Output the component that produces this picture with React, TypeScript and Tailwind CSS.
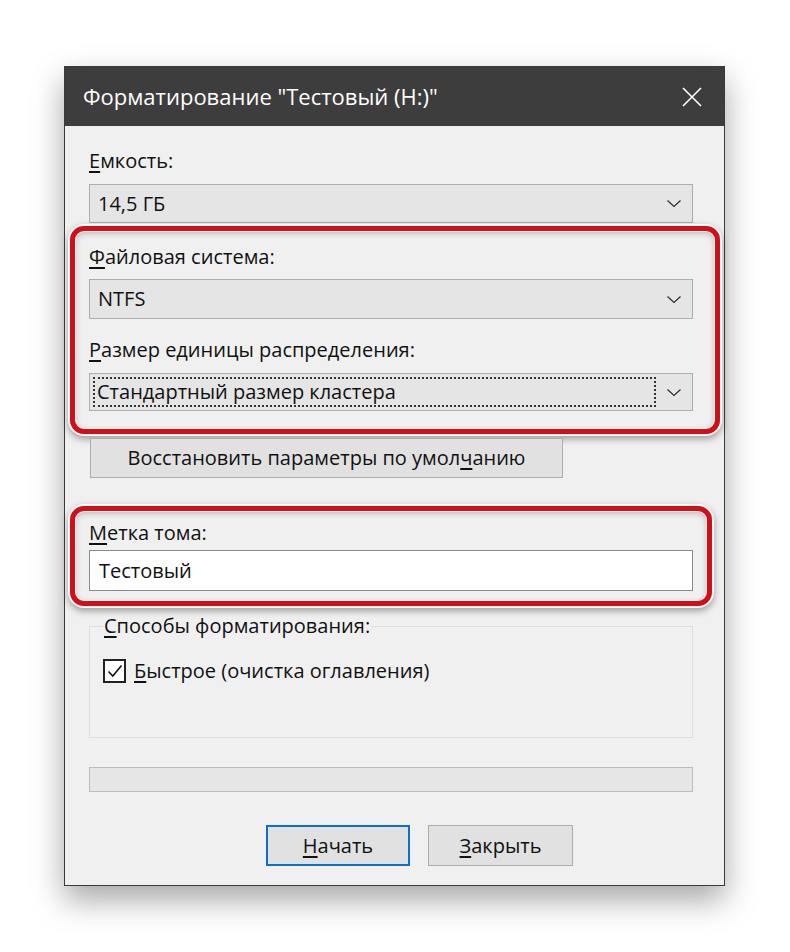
import React from 'react';

const Chevron = () => (
  <svg width="16" height="9" viewBox="0 0 16 9" fill="none">
    <path d="M1.5 1.5 L8 7.5 L14.5 1.5" stroke="#2b2b2b" strokeWidth="1.2" />
  </svg>
);

const Key: React.FC<{ children: React.ReactNode }> = ({ children }) => (
  <span className="underline underline-offset-[3px] decoration-[1.5px]">{children}</span>
);

const Select: React.FC<{ value: string; focused?: boolean; h: string }> = ({ value, focused, h }) => (
  <div className={`flex items-center justify-between bg-[#e5e5e5] border border-[#adadad] ${h}`}>
    {focused ? (
      <div className="ml-[3px] flex-1 h-[30px] border-2 border-dotted border-[#333] flex items-center pl-[2px] mr-[10px]">
        {value}
      </div>
    ) : (
      <div className="pl-[8px]">{value}</div>
    )}
    <div className="pr-[10px] flex items-center">
      <Chevron />
    </div>
  </div>
);

export default function App() {
  return (
    <div
      className="w-[790px] h-[952px] bg-white pt-[66px] pl-[64px] text-[20px] text-[#111]"
      style={{ fontFamily: '"Open Sans", "Noto Sans", sans-serif' }}
    >
      <div className="w-[661px] h-[820px] border border-[#3a3a3a] bg-[#f0f0f0] shadow-[0_14px_30px_rgba(0,0,0,0.35)] flex flex-col">
        <div className="h-[59px] bg-[#3d3d3d] flex items-center justify-between pl-[18px] pr-[22px] text-white text-[22px]">
          <span>Форматирование "Тестовый (H:)"</span>
          <svg width="20" height="20" viewBox="0 0 20 20">
            <path d="M1 1 L19 19 M19 1 L1 19" stroke="#fff" strokeWidth="1.6" />
          </svg>
        </div>

        <div className="pl-[24px] pr-[31px] pt-[21px] flex flex-col leading-[28px]">
          <div><Key>Е</Key>мкость:</div>
          <div className="mt-[9px]">
            <Select value="14,5 ГБ" h="h-[39px]" />
          </div>

          <div className="mt-[3px] -ml-[19px] -mr-[27px] border-[5px] border-[#d10f19] rounded-[14px] pl-[14px] pr-[22px] pt-[12px] pb-[18px] shadow-[0_0_0_2px_rgba(255,255,255,0.9),0_3px_7px_2px_rgba(0,0,0,0.35),inset_0_0_0_1px_rgba(255,255,255,0.85),inset_0_2px_6px_rgba(0,0,0,0.25)]">
            <div><Key>Ф</Key>айловая система:</div>
            <div className="mt-[8px]">
              <Select value="NTFS" h="h-[40px]" />
            </div>
            <div className="mt-[17px]"><Key>Р</Key>азмер единицы распределения:</div>
            <div className="mt-[9px]">
              <Select value="Стандартный размер кластера" focused h="h-[38px]" />
            </div>
          </div>

          <div className="mt-[4px] ml-[1px] w-[473px] h-[40px] bg-[#e1e1e1] border border-[#adadad] flex items-center justify-center">
            <span>Восстановить параметры по умол<Key>ч</Key>анию</span>
          </div>

          <div className="mt-[28px] -ml-[19px] -mr-[19px] border-[5px] border-[#d10f19] rounded-[14px] pl-[14px] pr-[14px] pt-[8px] pb-[10px] shadow-[0_0_0_2px_rgba(255,255,255,0.9),0_3px_7px_2px_rgba(0,0,0,0.35),inset_0_0_0_1px_rgba(255,255,255,0.85),inset_0_2px_6px_rgba(0,0,0,0.25)]">
            <div><Key>М</Key>етка тома:</div>
            <div className="mt-[3px] h-[41px] bg-white border border-[#8a8a8a] flex items-center pl-[9px]">
              Тестовый
            </div>
          </div>

          <fieldset className="mt-[6px] border border-[#dedede] h-[126px] pl-[13px] pr-[10px]">
            <legend className="px-[1px]"><Key>С</Key>пособы форматирования:</legend>
            <div className="mt-[17px] flex items-center">
              <div className="w-[23px] h-[24px] border-2 border-[#222] bg-white flex items-center justify-center">
                <svg width="16" height="14" viewBox="0 0 16 14" fill="none">
                  <path d="M1.5 7.5 L5.8 12 L14.5 1.5" stroke="#111" strokeWidth="1.6" />
                </svg>
              </div>
              <span className="ml-[8px]"><Key>Б</Key>ыстрое (очистка оглавления)</span>
            </div>
          </fieldset>

          <div className="mt-[29px] h-[25px] bg-[#e6e6e6] border border-[#bcbcbc]" />

          <div className="mt-[33px] flex">
            <div className="ml-[177px] w-[144px] h-[41px] bg-[#e1e1e1] border-2 border-[#0d6fc8] flex items-center justify-center">
              <span><Key>Н</Key>ачать</span>
            </div>
            <div className="ml-[18px] w-[145px] h-[41px] bg-[#e1e1e1] border border-[#adadad] flex items-center justify-center">
              <span><Key>З</Key>акрыть</span>
            </div>
          </div>
        </div>
      </div>
    </div>
  );
}
